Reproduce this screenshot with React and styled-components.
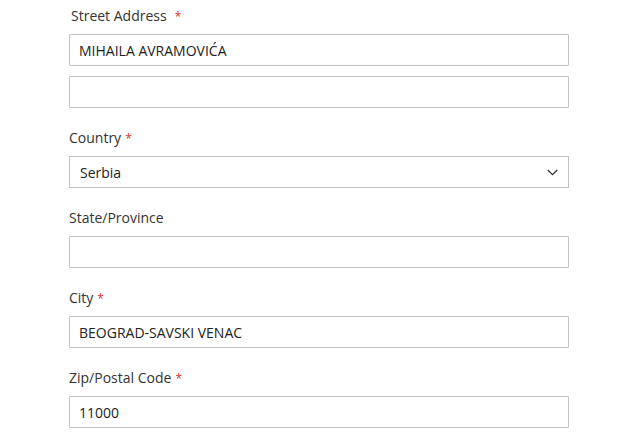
import styled, { createGlobalStyle } from "styled-components";

const Global = createGlobalStyle`
  body {
    margin: 0;
    background: #fff;
    font-family: "Open Sans", "Liberation Sans", sans-serif;
    color: #333;
  }
`

const Form = styled.div`
  width: 500px;
  padding: 6px 0 0 69px;
`

const Field = styled.div`
  margin-bottom: 20px;
`

const Label = styled.div`
  font-size: 14px;
  line-height: 20px;
  height: 20px;
  margin-bottom: 8px;
  padding-left: ${p => (p.$indent ? "2px" : "0")};
  color: #333;
`

const Star = styled.span`
  color: #e02b27;
  margin-left: ${p => (p.$wide ? "8px" : "4px")};
  font-size: 12px;
`

const Input = styled.input`
  display: block;
  box-sizing: border-box;
  width: 500px;
  height: 32px;
  padding: 0 9px;
  border: 1px solid #c2c2c2;
  border-radius: 1px;
  font-family: "Open Sans", "Liberation Sans", sans-serif;
  font-size: 14px;
  color: #222;
  background: #fff;
  outline: none;
  & + & {
    margin-top: 10px;
  }
`

const SelectBox = styled.div`
  box-sizing: border-box;
  width: 500px;
  height: 32px;
  padding: 0 10px 0 10px;
  border: 1px solid #c2c2c2;
  display: flex;
  align-items: center;
  justify-content: space-between;
  font-size: 14px;
  color: #222;
`

const Chevron = () => (
  <svg width="11" height="7" viewBox="0 0 11 7">
    <path d="M0.8 1 L5.5 5.6 L10.2 1" fill="none" stroke="#333" strokeWidth="1.3" />
  </svg>
)

export default function App() {
  return (
    <>
      <Global />
      <Form>
        <Field>
          <Label $indent>Street Address<Star $wide>*</Star></Label>
          <Input defaultValue="MIHAILA AVRAMOVIĆA" />
          <Input defaultValue="" />
        </Field>
        <Field>
          <Label>Country<Star>*</Star></Label>
          <SelectBox>
            <span>Serbia</span>
            <Chevron />
          </SelectBox>
        </Field>
        <Field>
          <Label>State/Province</Label>
          <Input defaultValue="" />
        </Field>
        <Field>
          <Label>City<Star>*</Star></Label>
          <Input defaultValue="BEOGRAD-SAVSKI VENAC" />
        </Field>
        <Field>
          <Label>Zip/Postal Code<Star>*</Star></Label>
          <Input defaultValue="11000" />
        </Field>
      </Form>
    </>
  );
}
